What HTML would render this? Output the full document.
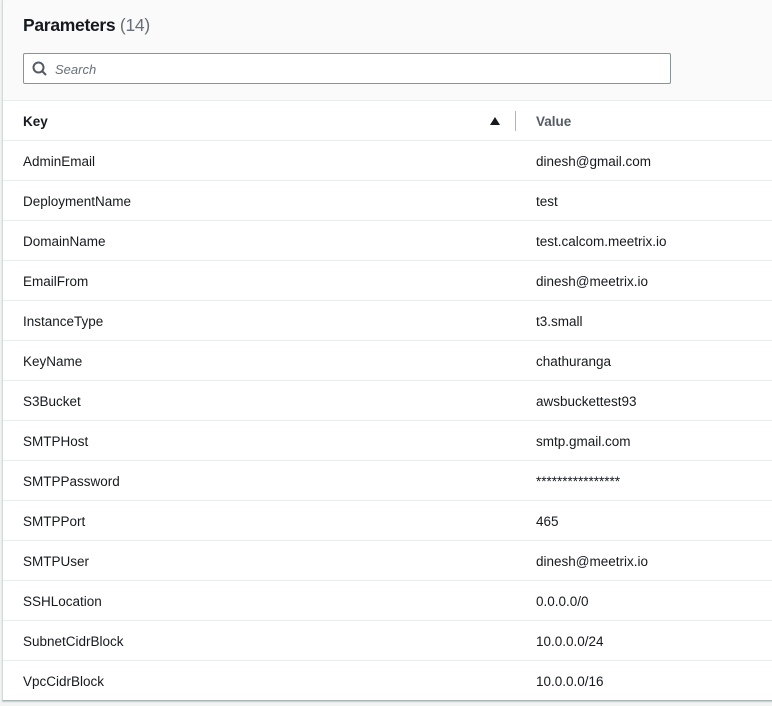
<!DOCTYPE html>
<html><head><style>
html,body{margin:0;padding:0;width:772px;height:706px;background:#f2f3f3;font-family:"Liberation Sans",sans-serif;color:#16191f;overflow:hidden}
.card{position:absolute;left:2px;top:0;width:772px;height:700px;background:#fff;border-left:1px solid #d5dbdb;border-bottom:1px solid #aab7b8;box-shadow:0 1px 1px rgba(0,31,63,.2)}
.head{height:100px;background:#fafafa;border-bottom:1px solid #eaeded;position:relative}
h2{position:absolute;left:20px;top:15px;margin:0;font-size:17.5px;font-weight:bold;letter-spacing:-0.3px}
h2 span{font-weight:normal;color:#687078}
.search{position:absolute;left:20px;top:53px;width:646px;height:29px;border:1px solid #879596;border-radius:2px;background:#fff}
.search svg{position:absolute;left:8px;top:7px}
.search i{position:absolute;left:31px;top:8px;font-size:13px;color:#687078}
.row{height:39px;border-bottom:1px solid #eaeded;position:relative;font-size:13.5px}
.row div{position:absolute;top:13px}
.k{left:20px}.v{left:533px}
.th{font-weight:bold;border-bottom:1px solid #eaeded}
.th .v{color:#545b64}
.tri{position:absolute;left:487px;top:16px;width:0;height:0;border-left:5px solid transparent;border-right:5px solid transparent;border-bottom:8px solid #16191f}
.sep{position:absolute;left:512px;top:10px;width:1px;height:20px;background:#aab7b8}
</style></head><body>
<div class="card">
<div class="head"><h2>Parameters <span>(14)</span></h2>
<div class="search"><svg width="16" height="16" viewBox="0 0 16 16"><circle cx="6.5" cy="6.5" r="5" fill="none" stroke="#545b64" stroke-width="2"/><line x1="10" y1="10" x2="14" y2="14" stroke="#545b64" stroke-width="2"/></svg><i>Search</i></div></div>
<div class="row th"><div class="k">Key</div><span class="tri"></span><span class="sep"></span><div class="v">Value</div></div>
<div class="row"><div class="k">AdminEmail</div><div class="v">dinesh@gmail.com</div></div>
<div class="row"><div class="k">DeploymentName</div><div class="v">test</div></div>
<div class="row"><div class="k">DomainName</div><div class="v">test.calcom.meetrix.io</div></div>
<div class="row"><div class="k">EmailFrom</div><div class="v">dinesh@meetrix.io</div></div>
<div class="row"><div class="k">InstanceType</div><div class="v">t3.small</div></div>
<div class="row"><div class="k">KeyName</div><div class="v">chathuranga</div></div>
<div class="row"><div class="k">S3Bucket</div><div class="v">awsbuckettest93</div></div>
<div class="row"><div class="k">SMTPHost</div><div class="v">smtp.gmail.com</div></div>
<div class="row"><div class="k">SMTPPassword</div><div class="v">****************</div></div>
<div class="row"><div class="k">SMTPPort</div><div class="v">465</div></div>
<div class="row"><div class="k">SMTPUser</div><div class="v">dinesh@meetrix.io</div></div>
<div class="row"><div class="k">SSHLocation</div><div class="v">0.0.0.0/0</div></div>
<div class="row"><div class="k">SubnetCidrBlock</div><div class="v">10.0.0.0/24</div></div>
<div class="row" style="border-bottom:none"><div class="k">VpcCidrBlock</div><div class="v">10.0.0.0/16</div></div>
</div>
</body></html>
